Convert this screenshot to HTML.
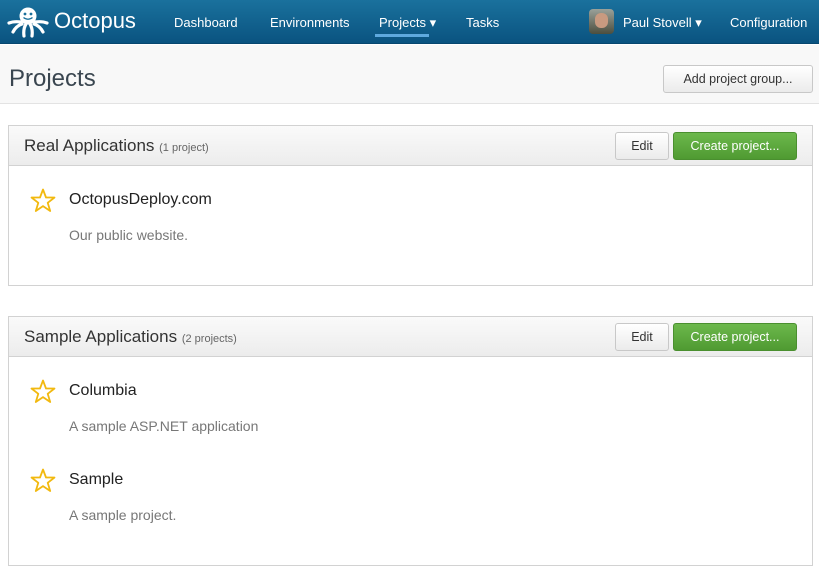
<!DOCTYPE html>
<html><head><meta charset="utf-8"><style>
*{margin:0;padding:0;box-sizing:border-box}
body{width:819px;height:575px;overflow:hidden;background:#fff;font-family:"Liberation Sans","DejaVu Sans",sans-serif;color:#333;position:relative}
.hdr{position:absolute;left:0;top:0;width:819px;height:44px;background:linear-gradient(#1a719d,#0a5380);border-bottom:1px solid #07476f}
.hdr span{position:absolute;color:#fff;font-size:13px;top:15px}
.logo{position:absolute;left:54px;top:8px;color:#fff;font-size:22px}
.sub{position:absolute;top:45px;left:0;width:819px;height:59px;background:#f8f8f8;border-bottom:1px solid #e3e3e3}
h1{position:absolute;left:9px;top:65px;font-weight:normal;font-size:24px;color:#3a4650}
.btn{position:absolute;height:28px;border:1px solid #c8c8c8;border-radius:3px;background:linear-gradient(#fff,#ebebeb);font-size:12.5px;color:#333;text-align:center;line-height:26px}
.green{background:linear-gradient(#6cb84c,#4f9a32);border-color:#4a8f2f;color:#fff}
.panel{position:absolute;left:8px;width:805px;border:1px solid #d2d2d2}
.ph{height:40px;background:linear-gradient(#fafafa,#ececec);border-bottom:1px solid #d2d2d2;position:relative}
.ph .t{position:absolute;left:15px;top:10px;font-size:17px;color:#333}
.ph .t small{font-size:11px;color:#666}
.proj{position:absolute;left:60px;font-size:16px;color:#222}
.desc{position:absolute;left:60px;font-size:14px;color:#777}
.star{position:absolute;left:21px}
</style></head><body>
<div class="hdr">
<svg style="position:absolute;left:7px;top:6px" width="42" height="32" viewBox="0 0 42 32"><ellipse cx="21" cy="10" rx="8.5" ry="8.5" fill="#fff"/><circle cx="18" cy="8" r="1.4" fill="#1a6f9a"/><circle cx="24" cy="8" r="1.4" fill="#1a6f9a"/><path d="M16.5 11.5q4.5 3.5 9 0" stroke="#1a6f9a" fill="none" stroke-width="1.3"/><path d="M14 16q-7 -1-12 1M15 18q-6 2-9 8M19 18q-3 5-2 12M23 18q3 5 2 12M27 18q6 2 9 8M28 16q7 -1 12 1" stroke="#fff" stroke-width="3.2" fill="none" stroke-linecap="round"/></svg>
<div class="logo">Octopus</div>
<span style="left:174px">Dashboard</span>
<span style="left:270px">Environments</span>
<span style="left:379px">Projects &#9662;</span>
<div style="position:absolute;left:375px;top:34px;width:54px;height:3px;background:#5ea9de"></div>
<span style="left:466px">Tasks</span>
<div style="position:absolute;left:589px;top:9px;width:25px;height:25px;border-radius:4px;background:linear-gradient(#9aa19a,#4b4e3e)"><div style="margin:4px 6px;width:13px;height:15px;border-radius:6px;background:#c89a80"></div></div>
<span style="left:623px">Paul Stovell &#9662;</span>
<span style="left:730px">Configuration</span>
</div>
<div class="sub"></div>
<h1>Projects</h1>
<div class="btn" style="left:663px;top:65px;width:150px">Add project group...</div>

<div class="panel" style="top:125px;height:161px">
<div class="ph"><div class="t">Real Applications <small>(1 project)</small></div>
<div class="btn" style="left:606px;top:6px;width:54px">Edit</div>
<div class="btn green" style="left:664px;top:6px;width:124px">Create project...</div></div>
<svg class="star" style="top:62px" width="26" height="25" viewBox="0 0 26 25"><polygon points="13,1.5 16,9.5 24.5,9.5 17.7,14.8 20.2,23 13,18.1 5.8,23 8.3,14.8 1.5,9.5 10,9.5" fill="none" stroke="#f2b90f" stroke-width="1.8" stroke-linejoin="round"/></svg>
<div class="proj" style="top:65px">OctopusDeploy.com</div>
<div class="desc" style="top:101px">Our public website.</div>
</div>

<div class="panel" style="top:316px;height:250px">
<div class="ph"><div class="t">Sample Applications <small>(2 projects)</small></div>
<div class="btn" style="left:606px;top:6px;width:54px">Edit</div>
<div class="btn green" style="left:664px;top:6px;width:124px">Create project...</div></div>
<svg class="star" style="top:62px" width="26" height="25" viewBox="0 0 26 25"><polygon points="13,1.5 16,9.5 24.5,9.5 17.7,14.8 20.2,23 13,18.1 5.8,23 8.3,14.8 1.5,9.5 10,9.5" fill="none" stroke="#f2b90f" stroke-width="1.8" stroke-linejoin="round"/></svg>
<div class="proj" style="top:65px">Columbia</div>
<div class="desc" style="top:101px">A sample ASP.NET application</div>
<svg class="star" style="top:151px" width="26" height="25" viewBox="0 0 26 25"><polygon points="13,1.5 16,9.5 24.5,9.5 17.7,14.8 20.2,23 13,18.1 5.8,23 8.3,14.8 1.5,9.5 10,9.5" fill="none" stroke="#f2b90f" stroke-width="1.8" stroke-linejoin="round"/></svg>
<div class="proj" style="top:154px">Sample</div>
<div class="desc" style="top:190px">A sample project.</div>
</div>
</body></html>
